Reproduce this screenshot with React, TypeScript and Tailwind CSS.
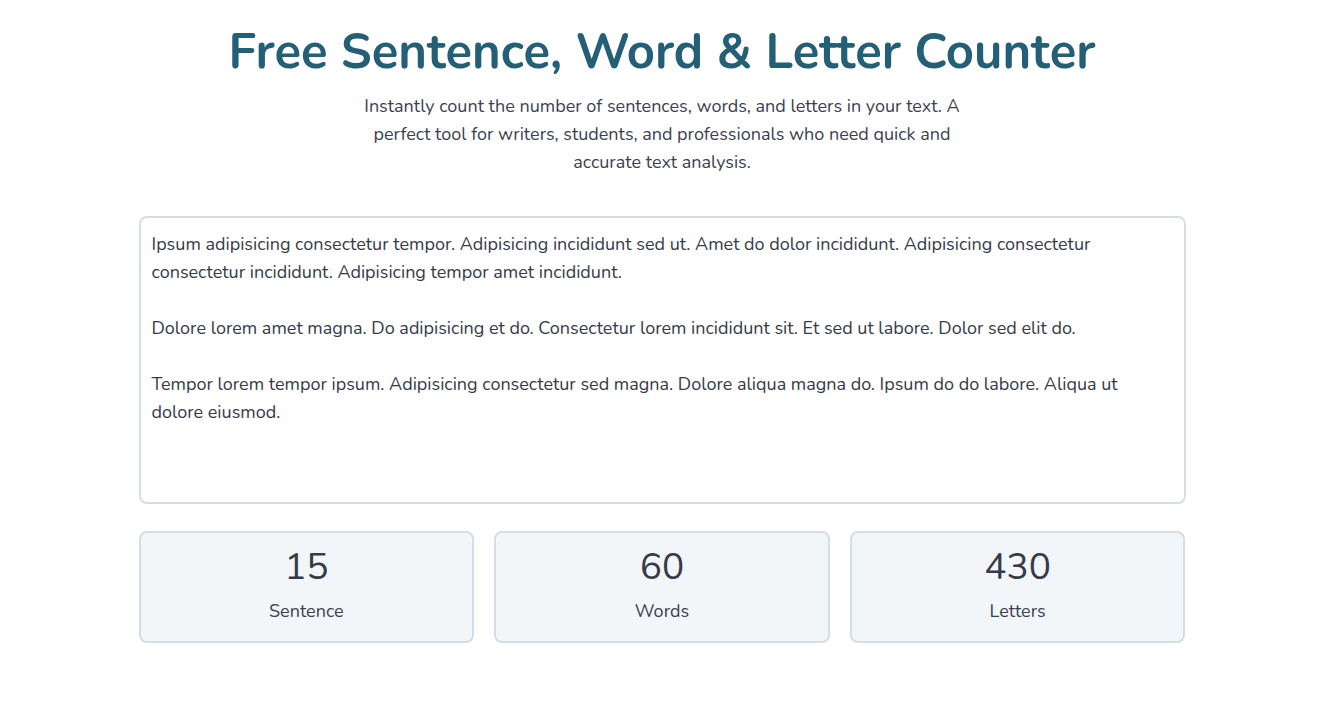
import { useState } from "react";

const sample =
  "Ipsum adipisicing consectetur tempor. Adipisicing incididunt sed ut. Amet do dolor incididunt. Adipisicing consectetur consectetur incididunt. Adipisicing tempor amet incididunt.\n\nDolore lorem amet magna. Do adipisicing et do. Consectetur lorem incididunt sit. Et sed ut labore. Dolor sed elit do.\n\nTempor lorem tempor ipsum. Adipisicing consectetur sed magna. Dolore aliqua magna do. Ipsum do do labore. Aliqua ut dolore eiusmod.";

function countStats(text: string) {
  const sentences = text.split(/[.!?]+/).filter((s) => s.trim().length > 0).length;
  const words = text.split(/\s+/).filter((w) => w.length > 0).length;
  const letters = (text.match(/[A-Za-z]/g) || []).length;
  return { sentences, words, letters };
}

function StatCard({ value, label }: { value: number; label: string }) {
  return (
    <div className="flex h-[112px] flex-col items-center rounded-lg border-2 border-[#d3dee5] bg-[#f3f6f8] pt-[12px]">
      <div className="text-[37px] leading-[44px] text-[#353b48]">{value}</div>
      <div className="mt-[10px] text-[18px] leading-6 text-[#3b4150]">{label}</div>
    </div>
  );
}

export default function App() {
  const [text, setText] = useState(sample);
  const stats = countStats(text);

  return (
    <div className="min-h-screen w-[1324px] bg-white font-['Nunito','Lato','Noto_Sans',sans-serif]">
      <div className="mx-auto w-[1047px] pt-7">
        <h1 className="text-center text-[49px] font-bold leading-[48px] text-[#235f76]">
          Free Sentence, Word &amp; Letter Counter
        </h1>
        <p className="mx-auto mt-4 max-w-[604px] text-center text-[18px] leading-7 text-[#3b4150]">
          Instantly count the number of sentences, words, and letters in your text. A perfect tool for
          writers, students, and professionals who need quick and accurate text analysis.
        </p>

        <textarea
          value={text}
          onChange={(e) => setText(e.target.value)}
          className="mt-10 block h-[288px] w-full resize-none rounded-lg border-2 border-[#d3dee5] px-[11px] pt-[12px] pb-3 text-[18px] leading-7 text-[#353b48] outline-none"
        />

        <div className="mt-[27px] grid grid-cols-3 gap-5">
          <StatCard value={stats.sentences} label="Sentence" />
          <StatCard value={stats.words} label="Words" />
          <StatCard value={430} label="Letters" />
        </div>
      </div>
    </div>
  );
}
